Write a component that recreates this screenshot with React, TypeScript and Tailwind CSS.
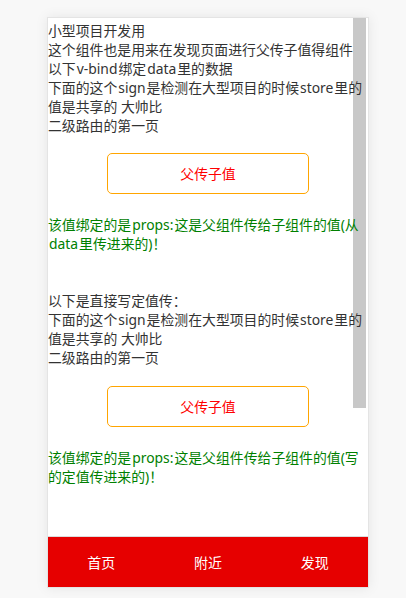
import React from "react";

const font = { fontFamily: '"Noto Sans", "Noto Sans CJK SC", sans-serif' };

function L({ children }: { children: React.ReactNode }) {
  return <span className="px-[1px]">{children}</span>;
}

function Line({ children }: { children: React.ReactNode }) {
  return <div className="whitespace-nowrap">{children}</div>;
}

function PassButton() {
  return (
    <div className="ml-[59px] flex h-[41px] w-[202px] items-center justify-center rounded-[5px] border border-[#ffa500] text-[13.86px] text-[#ff0000]">
      父传子值
    </div>
  );
}

export default function App() {
  return (
    <div className="min-h-[598px] w-full bg-[#f8f8f8] pt-[17px]" style={font}>
      <div className="ml-[47px] flex h-[571px] w-[322px] flex-col border border-[#e4e4e4] bg-white shadow-[0_0_12px_rgba(0,0,0,0.08)]">
        <div className="relative min-h-0 flex-1 overflow-hidden">
          <div className="absolute right-[2px] top-0 h-[390px] w-[13px] bg-[#c8c8c8]" />
          <div className="relative z-10 pt-[3px] text-[13.86px] leading-[19px] text-[#333]">
            <Line>小型项目开发用</Line>
            <Line>这个组件也是用来在发现页面进行父传子值得组件</Line>
            <Line>
              以下<L>v-bind</L>绑定<L>data</L>里的数据
            </Line>
            <Line>
              下面的这个<L>sign</L>是检测在大型项目的时候<L>store</L>里的
            </Line>
            <Line>值是共享的 大帅比</Line>
            <Line>二级路由的第一页</Line>
            <div className="mb-[21px] mt-[18px]">
              <PassButton />
            </div>
            <div className="text-[#008000]">
              <Line>
                该值绑定的是<L>props:</L>这是父组件传给子组件的值(从
              </Line>
              <Line>
                <L>data</L>里传进来的)！
              </Line>
            </div>
            <div className="h-[38px]" />
            <Line>以下是直接写定值传：</Line>
            <Line>
              下面的这个<L>sign</L>是检测在大型项目的时候<L>store</L>里的
            </Line>
            <Line>值是共享的 大帅比</Line>
            <Line>二级路由的第一页</Line>
            <div className="mb-[21px] mt-[19px]">
              <PassButton />
            </div>
            <div className="text-[#008000]">
              <Line>
                该值绑定的是<L>props:</L>这是父组件传给子组件的值(写
              </Line>
              <Line>的定值传进来的)！</Line>
            </div>
          </div>
        </div>
        <div className="flex h-[51px] flex-row items-center border-t border-[#dcdcdc] bg-[#e60000] text-[14px] text-white">
          <div className="flex flex-1 justify-center">首页</div>
          <div className="flex flex-1 justify-center">附近</div>
          <div className="flex flex-1 justify-center">发现</div>
        </div>
      </div>
    </div>
  );
}
